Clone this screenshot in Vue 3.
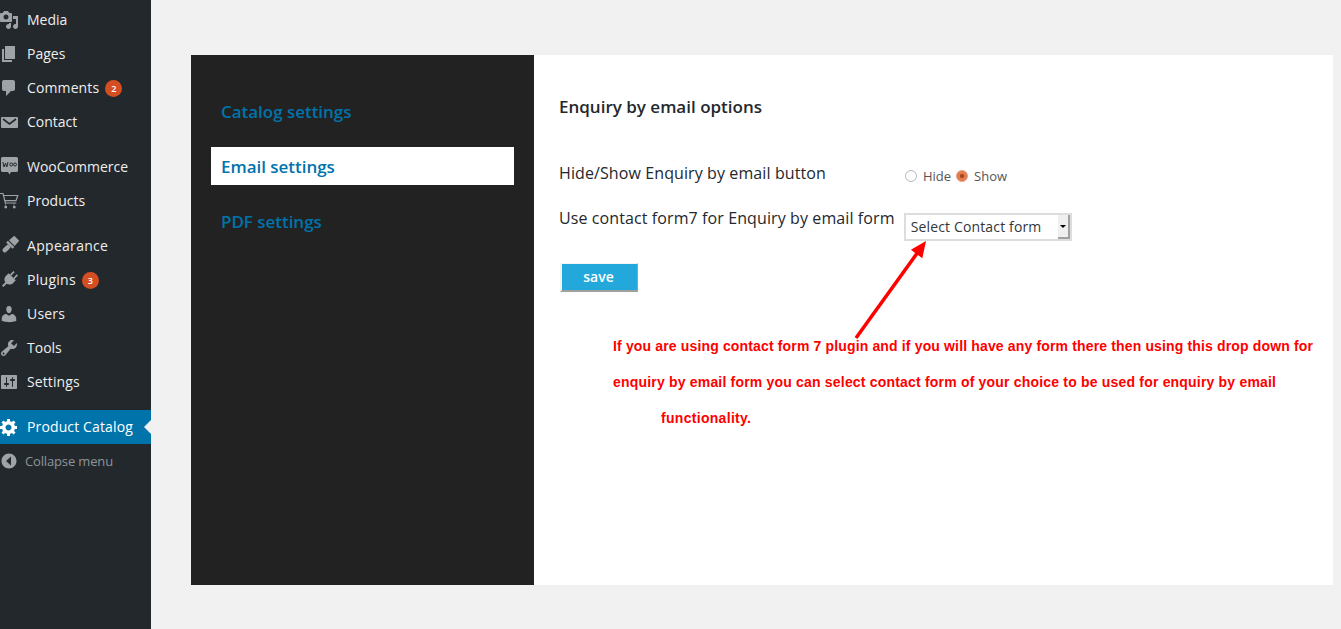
<script setup>
const groups = [
  [
    { label: 'Media', icon: 'media' },
    { label: 'Pages', icon: 'pages' },
    { label: 'Comments', icon: 'comments', badge: 2, track: 0.12 },
    { label: 'Contact', icon: 'contact' }
  ],
  [
    { label: 'WooCommerce', icon: 'woo' },
    { label: 'Products', icon: 'products' }
  ],
  [
    { label: 'Appearance', icon: 'appearance', track: 0.3 },
    { label: 'Plugins', icon: 'plugins', badge: 3, track: 0.28 },
    { label: 'Users', icon: 'users', track: 0.2 },
    { label: 'Tools', icon: 'tools' },
    { label: 'Settings', icon: 'settings', track: 0.1 }
  ]
]
</script>

<template>
  <div class="page">
    <aside class="sidebar">
      <ul v-for="(group, g) in groups" :key="g" class="group">
        <li v-for="item in group" :key="item.label" class="row">
          <svg class="icon" viewBox="0 0 20 20" fill="#9ea3a8">
            <path v-if="item.icon === 'media'" d="M13 11V4c0-.55-.45-1-1-1h-1.670L9 1H5L3.670 3H2c-.55 0-1 .45-1 1v7c0 .55.45 1 1 1h10c.55 0 1-.45 1-1zM7 4.500c1.380 0 2.500 1.120 2.500 2.500S8.380 9.500 7 9.500 4.500 8.380 4.500 7 5.620 4.500 7 4.500zM14 6h5v10.500c0 1.380-1.120 2.500-2.500 2.500S14 17.880 14 16.500s1.120-2.500 2.500-2.500c.17 0 .34.02.5.05V9h-3V6zm-4 8.050V13h2v3.500c0 1.380-1.120 2.500-2.500 2.500S7 17.880 7 16.500 8.120 14 9.500 14c.17 0 .34.02.5.05z" fill-rule="evenodd" />
            <path v-else-if="item.icon === 'pages'" d="M6 15V2h10v13H6zm-1 1h8v2H3V5h2v11z" />
            <path v-else-if="item.icon === 'comments'" d="M5 2h9c1.100 0 2 .9 2 2v7c0 1.100-.9 2-2 2h-2l-5 5v-5H5c-1.100 0-2-.9-2-2V4c0-1.100.9-2 2-2z" />
            <template v-else-if="item.icon === 'contact'">
              <path d="M3 5h15a1 1 0 0 1 1 1v9a1 1 0 0 1-1 1H3a1 1 0 0 1-1-1V6a1 1 0 0 1 1-1z" />
              <path d="M4 7l6.500 5L17 7" fill="none" stroke="#23282d" stroke-width="1.600" />
            </template>
            <template v-else-if="item.icon === 'woo'">
              <path d="M3.500 0h14A1.500 1.500 0 0 1 19 1.500v12a1.500 1.500 0 0 1-1.500 1.500H12l-1.500 2.500L9 15H3.500A1.500 1.500 0 0 1 2 13.500v-12A1.500 1.500 0 0 1 3.500 0z" />
              <g fill="none" stroke="#23282d" stroke-width="1">
                <path d="M3.800 5l1.200 5 1.500-3.800 1.300 3.800 1.200-5" />
                <circle cx="12.200" cy="7.500" r="1.500" />
                <circle cx="16" cy="7.500" r="1.500" />
              </g>
            </template>
            <template v-else-if="item.icon === 'products'">
              <path d="M1 2.500h3l2.300 9.500h11M4.600 4.500h14.200l-1.800 5.200H5.800" fill="none" stroke="#9ea3a8" stroke-width="1.200" />
              <path d="M5.500 15h2.500v2.200H5.500zM14 15h2.500v2.200H14z" />
              <path d="M6.500 12v3M15 12v3" stroke="#9ea3a8" stroke-width=".6" />
            </template>
            <g v-else-if="item.icon === 'appearance'" transform="rotate(45 10 10) translate(0 -1)">
              <path d="M6.500 0L13.500 0 14 7H6z" />
              <path d="M5.500 8h9v2.500h-9z" />
              <path d="M8 10.500h4l.3 3v3.500a2.300 2.300 0 0 1-4.600 0v-3.500z" />
            </g>
            <g v-else-if="item.icon === 'plugins'" transform="rotate(45 10 10) translate(0 -.5)">
              <path d="M6.800 1h1.700v5H6.800zM11.500 1h1.700v5h-1.700z" />
              <path d="M5 6h10v4c0 2.500-2 4.500-4 4.800V19.500H9v-4.700C7 14.500 5 12.500 5 10z" />
            </g>
            <path v-else-if="item.icon === 'users'" d="M10 9.250c-2.270 0-2.730-3.440-2.730-3.440C7 4.020 7.820 2 9.970 2c2.160 0 2.980 2.020 2.710 3.810 0 0-.41 3.440-2.680 3.440zm0 2.570L12.720 10c2.390 0 4.520 2.330 4.520 4.530v2.490s-3.650 1.130-7.240 1.130c-3.650 0-7.240-1.130-7.240-1.130v-2.490c0-2.250 1.940-4.480 4.470-4.480z" />
            <path v-else-if="item.icon === 'tools'" d="M16.680 9.770c-1.340 1.340-3.300 1.670-4.950.99l-5.410 6.520c-.99.99-2.590.99-3.580 0s-.99-2.590 0-3.570l6.520-5.420c-.68-1.650-.35-3.610.99-4.950 1.280-1.280 3.120-1.620 4.720-1.060l-2.890 2.890 2.820 2.820 2.860-2.870c.53 1.580.18 3.390-1.080 4.650zM3.810 16.210c.4.39 1.040.39 1.430 0 .4-.4.4-1.040 0-1.440-.39-.39-1.030-.39-1.430 0-.39.4-.39 1.040 0 1.440z" fill-rule="evenodd" />
            <path v-else-if="item.icon === 'settings'" d="M18 16V4c0-.55-.45-1-1-1H3c-.55 0-1 .45-1 1v12c0 .55.45 1 1 1h14c.55 0 1-.45 1-1zM8 11h1c.55 0 1 .45 1 1s-.45 1-1 1H8v1.500c0 .28-.22.5-.5.5s-.5-.22-.5-.5V13H6c-.55 0-1-.45-1-1s.45-1 1-1h1V5.500c0-.28.22-.5.5-.5s.5.22.5.5V11zm5-2h-1c-.55 0-1-.45-1-1s.45-1 1-1h1V5.500c0-.28.22-.5.5-.5s.5.22.5.5V7h1c.55 0 1 .45 1 1s-.45 1-1 1h-1v5.500c0 .28-.22.5-.5.5s-.5-.22-.5-.5V9z" fill-rule="evenodd" />
          </svg>
          <span class="label" :style="item.track ? { letterSpacing: item.track + 'px' } : null">{{ item.label }}</span>
          <span v-if="item.badge" class="badge">{{ item.badge }}</span>
        </li>
      </ul>
      <div class="row current">
        <svg class="icon" viewBox="0 0 20 20" fill="#fff">
          <path fill-rule="evenodd" d="M18 12h-2.180c-.17.7-.44 1.350-.81 1.930l1.540 1.540-2.100 2.100-1.540-1.540c-.58.36-1.230.64-1.910.81V19H8v-2.180c-.68-.17-1.330-.45-1.910-.81l-1.540 1.540-2.120-2.120 1.540-1.540c-.36-.58-.64-1.230-.81-1.910H1V9.030h2.170c.17-.68.45-1.330.81-1.910L2.440 5.580l2.100-2.100 1.540 1.540c.58-.37 1.230-.64 1.930-.81V2h3v2.180c.68.17 1.330.44 1.910.81l1.540-1.540 2.120 2.120-1.540 1.540c.36.59.64 1.230.81 1.930H18V12zm-8.500 1.500c1.660 0 3-1.340 3-3s-1.340-3-3-3-3 1.340-3 3 1.340 3 3 3z" />
        </svg>
        <span class="label current-label">Product Catalog</span>
        <span class="pointer"></span>
      </div>
      <div class="row collapse">
        <svg class="icon" viewBox="0 0 20 20">
          <path fill="#9ea3a8" fill-rule="evenodd" d="M10 2.500c-4.100 0-7.500 3.400-7.500 7.500s3.400 7.500 7.500 7.500 7.500-3.400 7.500-7.500-3.400-7.500-7.500-7.500zM12 14.500L7 10l5-4.500z" />
        </svg>
        <span class="collapse-label">Collapse menu</span>
      </div>
    </aside>

    <main class="main">
      <div class="panel">
        <nav class="tabs">
          <a class="tab">Catalog settings</a>
          <a class="tab active">Email settings</a>
          <a class="tab">PDF settings</a>
        </nav>
        <section class="content">
          <h2 class="title">Enquiry by email options</h2>
          <div class="field first">
            <span class="field-label">Hide/Show Enquiry by email button</span>
            <div class="radios">
              <span class="radio"></span>
              <span class="radio-text">Hide</span>
              <span class="radio on"></span>
              <span class="radio-text">Show</span>
            </div>
          </div>
          <div class="field second">
            <span class="field-label">Use contact form7 for Enquiry by email form</span>
            <div class="select">
              <span>Select Contact form</span>
              <span class="select-btn"></span>
            </div>
          </div>
          <button class="save">save</button>
          <div class="note">
            <p class="note-one">If you are using contact form 7 plugin and if you will have any form there then using this drop down for</p>
            <p class="note-two">enquiry by email form you can select contact form of your choice to be used for enquiry by email</p>
            <p class="note-last">functionality.</p>
          </div>
          <svg class="arrow" width="90" height="110" viewBox="0 0 90 110">
            <path d="M4 105L66 19" stroke="#f00" stroke-width="3.500" fill="none" />
            <path d="M74 8L70.300 25.300 58.900 16.700z" fill="#f00" />
          </svg>
        </section>
      </div>
    </main>
  </div>
</template>

<style>
html, body { margin: 0; background: #f1f1f1; }
</style>

<style scoped>
.page {
  display: flex;
  width: 1341px;
  height: 629px;
  overflow: hidden;
  font-family: "Open Sans", sans-serif;
  background: #f1f1f1;
}
.sidebar {
  width: 151px;
  flex: none;
  background: #23282d;
  padding-top: 3px;
  box-sizing: border-box;
}
.group {
  list-style: none;
  margin: 0 0 11px;
  padding: 0;
}
.row {
  display: flex;
  align-items: center;
  height: 34px;
  font-size: 14px;
  color: #eee;
  position: relative;
}
.icon {
  width: 20px;
  height: 20px;
  flex: none;
  margin-left: -1px;
  margin-right: 8px;
}
.label {
  margin-bottom: 2px;
}
.current-label {
  letter-spacing: 0.13px;
}
.badge {
  width: 17px;
  height: 17px;
  border-radius: 50%;
  background: #d54e21;
  color: #fff;
  font-size: 9px;
  font-weight: 600;
  line-height: 17px;
  text-align: center;
  margin-left: 6px;
}
.current {
  background: #0073aa;
  color: #fff;
}
.pointer {
  position: absolute;
  right: 0;
  top: 10px;
  border: 7px solid transparent;
  border-right-color: #f1f1f1;
  border-left-width: 0;
}
.collapse-label {
  font-size: 13px;
  color: #8f9498;
  margin-left: -2px;
  letter-spacing: -0.15px;
}
.main {
  flex: 1;
  padding: 55px 8px 0 40px;
}
.panel {
  display: flex;
  height: 530px;
  background: #fff;
}
.tabs {
  width: 343px;
  flex: none;
  box-sizing: border-box;
  background: #222;
  padding: 37px 20px 0;
  display: flex;
  flex-direction: column;
  gap: 17px;
}
.tab {
  height: 38px;
  line-height: 40px;
  padding-left: 10px;
  font-size: 17px;
  font-weight: 600;
  letter-spacing: -0.03px;
  color: #0073aa;
}
.active {
  background: #fff;
}
.content {
  flex: 1;
  position: relative;
  padding: 42px 0 0 25px;
  color: #23282d;
}
.title {
  margin: 0;
  font-size: 17px;
  line-height: 20px;
  font-weight: 600;
  color: #23282d;
}
.field {
  display: flex;
  font-size: 16px;
  line-height: 22px;
}
.first {
  margin-top: 45px;
}
.second {
  margin-top: 23px;
}
.field-label {
  white-space: nowrap;
  letter-spacing: 0.1px;
}
.radios {
  display: flex;
  align-items: center;
  height: 14px;
  margin-left: 79px;
  margin-top: 7px;
  font-size: 13px;
  color: #555;
}
.radio {
  width: 10px;
  height: 10px;
  border: 1px solid #b4b9be;
  border-radius: 50%;
  background: #fff;
  position: relative;
}
.radio.on {
  background: #e8794a;
  border-color: #d9a58f;
}
.radio.on::after {
  content: "";
  position: absolute;
  left: 3px;
  top: 3px;
  width: 4px;
  height: 4px;
  border-radius: 50%;
  background: #9a4524;
}
.radio-text {
  margin-left: 6px;
  margin-right: 5px;
}
.select {
  width: 168px;
  height: 28px;
  margin-left: 9px;
  margin-top: 6px;
  box-sizing: border-box;
  border: 2px solid #ddd;
  display: flex;
  justify-content: space-between;
  align-items: center;
  padding-left: 5px;
  font-size: 14px;
  letter-spacing: 0.15px;
  color: #32373c;
}
.select-btn {
  width: 12px;
  height: 24px;
  box-sizing: border-box;
  background: #efefef;
  border-right: 2px solid #a0a0a0;
  border-bottom: 2px solid #a0a0a0;
  position: relative;
}
.select-btn::after {
  content: "";
  position: absolute;
  left: 2px;
  top: 10px;
  border: 3px solid transparent;
  border-top: 3px solid #000;
  border-bottom: 0;
}
.save {
  display: block;
  box-sizing: border-box;
  margin: 22px 0 0 1px;
  width: 78px;
  height: 29px;
  border-style: solid;
  border-width: 1px 1px 2px 2px;
  border-color: #f4f4f4 #a0a0a0 #a0a0a0 #f4f4f4;
  background: #23a8db;
  color: #fff;
  font-family: "Open Sans", sans-serif;
  font-size: 14px;
  font-weight: 600;
  padding: 0 2px 2px 0;
}
.note {
  position: absolute;
  left: 79px;
  top: 273px;
  font-family: "Liberation Sans", sans-serif;
  font-size: 14px;
  font-weight: 700;
  color: #f00;
  white-space: nowrap;
}
.note p {
  margin: 0;
  line-height: 36px;
}
.note-one {
  letter-spacing: 0.15px;
}
.note-two {
  letter-spacing: 0.19px;
}
.note-last {
  padding-left: 48px;
  letter-spacing: 0.3px;
}
.arrow {
  position: absolute;
  left: 318px;
  top: 178px;
}
</style>
